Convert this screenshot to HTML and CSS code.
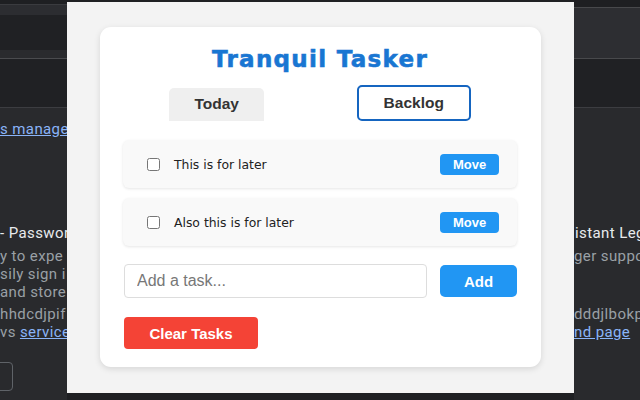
FILE: index.html
```html
<!DOCTYPE html>
<html>
<head>
<meta charset="utf-8">
<link rel="stylesheet" href="styles.css">
</head>
<body>
<div class="page">
  <div class="strip strip-left">
    <div class="band b-top"></div>
    <div class="band b-head"></div>
    <div class="band b-dark1"></div>
    <div class="band b-mid"></div>
    <div class="band b-dark2"></div>
    <div class="content-area">
      <div class="bg-line l-link"><a class="bg-a">s manage</a></div>
      <div class="bg-line l-title">- Passwor</div>
      <div class="bg-line l-desc1">y to expe</div>
      <div class="bg-line l-desc">sily sign i</div>
      <div class="bg-line l-desc">and store</div>
      <div class="bg-line l-id">hhdcdjpif</div>
      <div class="bg-line l-desc">vs <a class="bg-a">service</a></div>
      <div class="bg-btn"></div>
    </div>
  </div>

  <div class="center">
    <div class="modal">
      <div class="card">
        <h1 class="title">Tranquil Tasker</h1>
        <div class="tabs">
          <button class="tab tab-today">Today</button>
          <button class="tab tab-backlog">Backlog</button>
        </div>
        <ul class="tasks">
          <li class="task">
            <input type="checkbox" class="check">
            <span class="task-text">This is for later</span>
            <button class="move">Move</button>
          </li>
          <li class="task">
            <input type="checkbox" class="check">
            <span class="task-text">Also this is for later</span>
            <button class="move">Move</button>
          </li>
        </ul>
        <div class="add-row">
          <input type="text" class="task-input" placeholder="Add a task...">
          <button class="add">Add</button>
        </div>
        <button class="clear">Clear Tasks</button>
      </div>
    </div>
  </div>

  <div class="strip strip-right">
    <div class="band r-top"></div>
    <div class="band r-head"></div>
    <div class="band r-dark"></div>
    <div class="content-area">
      <div class="bg-line r-title">istant Leg</div>
      <div class="bg-line r-desc1">ger suppo</div>
      <div class="bg-line r-id">dddjlbokp</div>
      <div class="bg-line l-desc"><a class="bg-a">nd page</a></div>
    </div>
  </div>
</div>
</body>
</html>
```
FILE: styles.css
```css
* { box-sizing: border-box; }
html, body {
  margin: 0;
  padding: 0;
  width: 640px;
  height: 400px;
  overflow: hidden;
  background: #292a2d;
}
.page {
  display: grid;
  grid-template-columns: 67px 507px 66px;
  height: 400px;
}
.strip {
  display: flex;
  flex-direction: column;
  overflow: hidden;
  font-family: Roboto, "Liberation Sans", sans-serif;
  font-size: 15px;
  letter-spacing: 0.4px;
  white-space: nowrap;
}
.band { flex: none; }
.b-top { height: 4px; background: #1e1f22; }
.b-head { height: 11px; background: #2c2d31; border-top: 1px solid #3a3b3f; }
.b-dark1 { height: 35px; background: #202124; }
.b-mid { height: 9px; background: #2a2b2e; border-bottom: 1px solid #4a4b4e; }
.b-dark2 { height: 49px; background: #202124; border-bottom: 1px solid #3c3d41; }
.r-top { height: 8px; background: #1e1f22; border-bottom: 1px solid #48494c; }
.r-head { height: 51px; background: #2d2e32; border-bottom: 1px solid #48494c; }
.r-dark { height: 49px; background: #202124; border-bottom: 1px solid #3c3d41; }
.content-area {
  flex: 1;
  background: #292a2d;
  display: flex;
  flex-direction: column;
}
.bg-line { line-height: 18px; color: #9aa0a6; }
.bg-a { color: #8ab4f8; text-decoration: underline; }
.l-link { margin-top: 12px; }
.l-title { margin-top: 86px; color: #e8eaed; }
.l-desc1 { margin-top: 5px; }
.l-id { margin-top: 4px; }
.bg-btn {
  margin-top: 21px;
  margin-left: -20px;
  width: 33px;
  height: 29px;
  border: 1px solid #5f6368;
  border-radius: 4px;
}
.r-title { margin-top: 116px; color: #e8eaed; padding-left: 1px; }
.r-desc1 { margin-top: 5px; }
.r-id { margin-top: 40px; }

.center {
  background: #1f2023;
  padding-top: 2px;
}
.modal {
  height: 391px;
  background: #f3f3f3;
  padding-top: 25px;
  display: flex;
  justify-content: center;
  align-items: flex-start;
}
.card {
  width: 441px;
  height: 340px;
  background: #ffffff;
  border-radius: 11px;
  box-shadow: 0 2px 6px rgba(0,0,0,0.12);
  padding: 19px 24px 18px 23px;
  display: flex;
  flex-direction: column;
}
.title {
  margin: 0 0 13px 0;
  font-family: "DejaVu Sans", Verdana, sans-serif;
  font-weight: bold;
  font-size: 23px;
  line-height: 26px;
  letter-spacing: 1.3px;
  -webkit-text-stroke: 0.6px #1976d2;
  color: #1976d2;
  text-align: center;
}
.tabs {
  display: flex;
  justify-content: space-around;
  align-items: center;
  height: 36px;
}
.tab {
  font-family: "Liberation Sans", Arial, sans-serif;
  font-weight: bold;
  font-size: 15.5px;
  color: #333333;
  padding: 0;
  cursor: pointer;
}
.tab-today {
  width: 95px;
  height: 33px;
  background: #efefef;
  border: none;
  border-radius: 5px 5px 0 0;
  margin-top: 2px;
}
.tab-backlog {
  width: 114px;
  height: 36px;
  background: #ffffff;
  border: 2px solid #1565c0;
  border-radius: 5px;
}
.tasks {
  list-style: none;
  margin: 19px 0 0 0;
  padding: 0;
  display: flex;
  flex-direction: column;
  gap: 10px;
}
.task {
  height: 48px;
  background: #f9f9f9;
  border-radius: 6px;
  box-shadow: 0 1px 3px rgba(0,0,0,0.10);
  display: flex;
  align-items: center;
  padding: 0 18px 0 24px;
}
.check {
  width: 13px;
  height: 13px;
  margin: 0 14px 0 0;
}
.task-text {
  flex: 1;
  font-family: "DejaVu Sans", Verdana, sans-serif;
  font-size: 12.4px;
  color: #222222;
}
.move {
  width: 59px;
  height: 21px;
  background: #2196f3;
  color: #ffffff;
  border: none;
  border-radius: 4px;
  font-family: "Liberation Sans", Arial, sans-serif;
  font-weight: bold;
  font-size: 13px;
  padding: 0;
}
.add-row {
  display: flex;
  align-items: center;
  gap: 13px;
  margin-top: 18px;
  padding-left: 1px;
}
.task-input {
  width: 303px;
  height: 34px;
  border: 1px solid #dddddd;
  border-radius: 4px;
  padding: 0 12px;
  font-family: "Liberation Sans", Arial, sans-serif;
  font-size: 16px;
  color: #333;
  background: #fff;
}
.task-input::placeholder { color: #777777; }
.add {
  width: 77px;
  height: 32px;
  background: #2196f3;
  color: #ffffff;
  border: none;
  border-radius: 5px;
  font-family: "Liberation Sans", Arial, sans-serif;
  font-weight: bold;
  font-size: 15px;
  padding: 0;
}
.clear {
  margin-top: 19px;
  margin-left: 1px;
  width: 134px;
  height: 32px;
  background: #f44336;
  color: #ffffff;
  border: none;
  border-radius: 4px;
  font-family: "Liberation Sans", Arial, sans-serif;
  font-weight: bold;
  font-size: 15px;
  padding: 0;
}
```
